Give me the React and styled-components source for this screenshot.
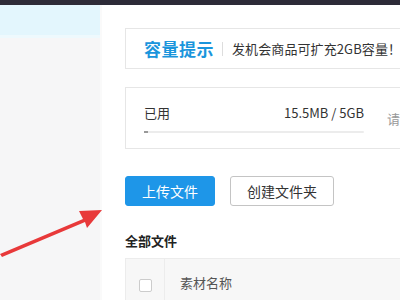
import React from "react";
import styled, { createGlobalStyle } from "styled-components";

const GlobalStyle = createGlobalStyle`
  html, body {
    margin: 0;
    padding: 0;
    background: #fff;
    font-family: "Noto Sans CJK SC", "Noto Sans", sans-serif;
  }
`;

const Page = styled.div`
  position: relative;
  width: 400px;
  height: 300px;
  overflow: hidden;
  display: flex;
  flex-direction: column;
`;

const TopBar = styled.div`
  height: 5px;
  background: #2d2b38;
  flex-shrink: 0;
`;

const Body = styled.div`
  flex: 1;
  display: flex;
  min-height: 0;
`;

const Sidebar = styled.div`
  width: 100px;
  flex-shrink: 0;
  background: #f6f6f7;
  border-right: 2px solid #fafafa;
  .active {
    height: 30px;
    background: #e3f6fd;
    border-bottom: 3px solid #eef9fd;
  }
`;

const Main = styled.div`
  flex: 1;
  padding: 23px 0 0 23px;
  display: flex;
  flex-direction: column;
  overflow: hidden;
`;

const Card = styled.div`
  width: 520px;
  box-sizing: border-box;
  border: 1px solid #e6e6e6;
  background: #fff;
  flex-shrink: 0;
`;

const HintCard = styled(Card)`
  height: 41px;
  display: flex;
  align-items: center;
  padding-left: 18px;
  .title {
    color: #1a95dc;
    font-size: 17px;
    font-weight: 700;
    letter-spacing: 0.5px;
  }
  .sep {
    width: 1px;
    height: 14px;
    background: #ddd;
    margin: 0 9px 0 8px;
  }
  .msg {
    color: #333;
    font-size: 13px;
    letter-spacing: 0.1px;
  }
`;

const UsageCard = styled(Card)`
  margin-top: 18px;
  height: 62px;
  display: flex;
  padding: 16px 0 0 18px;
  gap: 23px;
`;

const UsageInfo = styled.div`
  width: 220px;
  display: flex;
  flex-direction: column;
  .row {
    display: flex;
    justify-content: space-between;
    font-size: 13px;
    color: #333;
    line-height: 18px;
  }
`;

const Bar = styled.div`
  margin-top: 9px;
  height: 2px;
  background: #ececec;
  border-radius: 1px;
  .fill {
    height: 100%;
    background: #999;
  }
`;

const Tip = styled.div`
  font-size: 13px;
  color: #999;
  margin-top: 5px;
`;

const Actions = styled.div`
  margin-top: 27px;
  display: flex;
  gap: 15px;
`;

const Button = styled.button`
  height: 30px;
  padding: 0 16px;
  font-family: inherit;
  font-size: 14px;
  border-radius: 3px;
  border: 1px solid ${(p) => (p.$primary ? "#1e96e8" : "#c4c4c4")};
  background: ${(p) => (p.$primary ? "#1e96e8" : "#fff")};
  color: ${(p) => (p.$primary ? "#fff" : "#333")};
`;

const SectionTitle = styled.div`
  margin-top: 26px;
  font-size: 13px;
  font-weight: 700;
  color: #222;
  line-height: 18px;
`;

const TableHead = styled.div`
  margin-top: 8px;
  width: 520px;
  height: 50px;
  display: flex;
  border: 1px solid #ececec;
  background: #f7f7f7;
  flex-shrink: 0;
`;

const CheckCell = styled.div`
  width: 39px;
  border-right: 1px solid #ececec;
  display: flex;
  justify-content: center;
  padding-top: 20px;
  box-sizing: border-box;
  .box {
    width: 11px;
    height: 11px;
    border: 1px solid #ccc;
    border-radius: 2px;
    background: #fff;
  }
`;

const NameCell = styled.div`
  padding: 14px 0 0 15px;
  font-size: 13px;
  color: #555;
`;

const Arrow = styled.svg`
  position: absolute;
  left: 0;
  top: 200px;
`;

export default function App() {
  return (
    <Page>
      <GlobalStyle />
      <TopBar />
      <Body>
        <Sidebar>
          <div className="active" />
        </Sidebar>
        <Main>
          <HintCard>
            <span className="title">容量提示</span>
            <span className="sep" />
            <span className="msg">发机会商品可扩充2GB容量！</span>
          </HintCard>
          <UsageCard>
            <UsageInfo>
              <div className="row">
                <span>已用</span>
                <span>15.5MB / 5GB</span>
              </div>
              <Bar>
                <div className="fill" style={{ width: `${(15.5 / 5120) * 100 + 1.5}%` }} />
              </Bar>
            </UsageInfo>
            <Tip>请</Tip>
          </UsageCard>
          <Actions>
            <Button $primary>上传文件</Button>
            <Button>创建文件夹</Button>
          </Actions>
          <SectionTitle>全部文件</SectionTitle>
          <TableHead>
            <CheckCell>
              <div className="box" />
            </CheckCell>
            <NameCell>素材名称</NameCell>
          </TableHead>
        </Main>
      </Body>
      <Arrow width="110" height="60" viewBox="0 0 110 60">
        <path d="M0 54 L83 19 L79 11 L102 10 L87 28 L85 22 L2 57 Z" fill="#e8393a" />
      </Arrow>
    </Page>
  );
}
